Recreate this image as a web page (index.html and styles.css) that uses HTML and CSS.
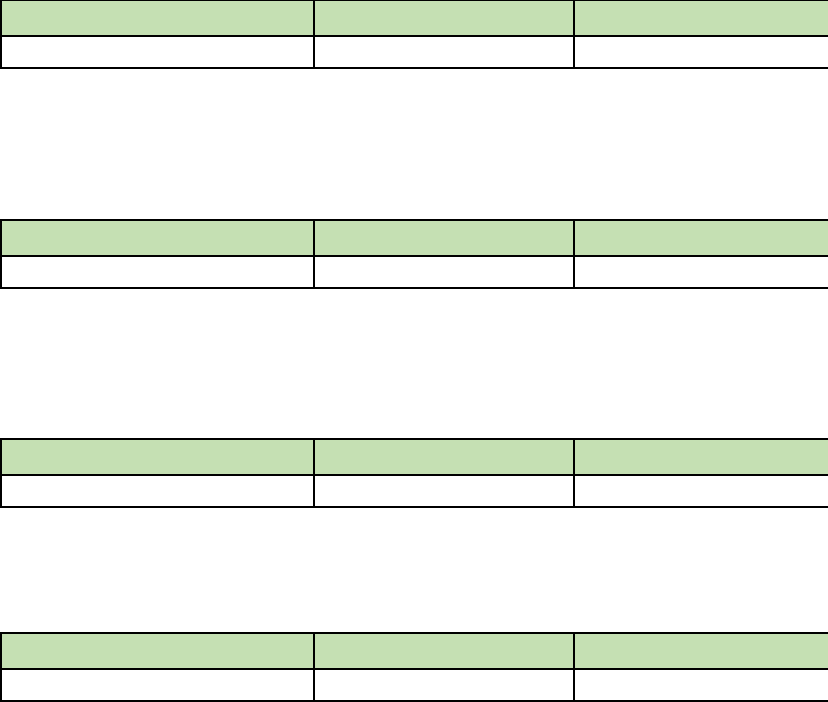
FILE: index.html
```html
<!DOCTYPE html>
<html lang="en">
<head>
<meta charset="utf-8">
<title>Tables</title>
<link rel="stylesheet" href="styles.css">
</head>
<body>
<div class="doc">
  <table class="grid grid-first">
    <colgroup><col class="c1"><col class="c2"><col class="c3"></colgroup>
    <tr class="head"><td></td><td></td><td></td></tr>
    <tr class="body"><td></td><td></td><td></td></tr>
  </table>
  <table class="grid gap-a">
    <colgroup><col class="c1"><col class="c2"><col class="c3"></colgroup>
    <tr class="head"><td></td><td></td><td></td></tr>
    <tr class="body"><td></td><td></td><td></td></tr>
  </table>
  <table class="grid gap-b">
    <colgroup><col class="c1"><col class="c2"><col class="c3"></colgroup>
    <tr class="head"><td></td><td></td><td></td></tr>
    <tr class="body"><td></td><td></td><td></td></tr>
  </table>
  <table class="grid gap-c">
    <colgroup><col class="c1"><col class="c2"><col class="c3"></colgroup>
    <tr class="head"><td></td><td></td><td></td></tr>
    <tr class="body"><td></td><td></td><td></td></tr>
  </table>
</div>
</body>
</html>
```
FILE: styles.css
```css
html, body {
  margin: 0;
  padding: 0;
  background: #ffffff;
  font-family: "Liberation Sans", Arial, sans-serif;
}

.doc {
  display: flex;
  flex-direction: column;
  width: 828px;
}

.grid {
  border-collapse: collapse;
  table-layout: fixed;
  width: 828px;
  border: 2px solid #000000;
}

.grid td {
  border: 2px solid #000000;
  padding: 0;
}

.c1 { width: 313px; }
.c2 { width: 260px; }
.c3 { width: 255px; }

.head td {
  background: #c5e0b3;
  height: 34px;
}

.body td {
  background: #ffffff;
  height: 30px;
}

.grid-first { margin-top: -1px; }
.gap-a { margin-top: 150px; }
.gap-b { margin-top: 149px; }
.gap-c { margin-top: 124px; }
```
